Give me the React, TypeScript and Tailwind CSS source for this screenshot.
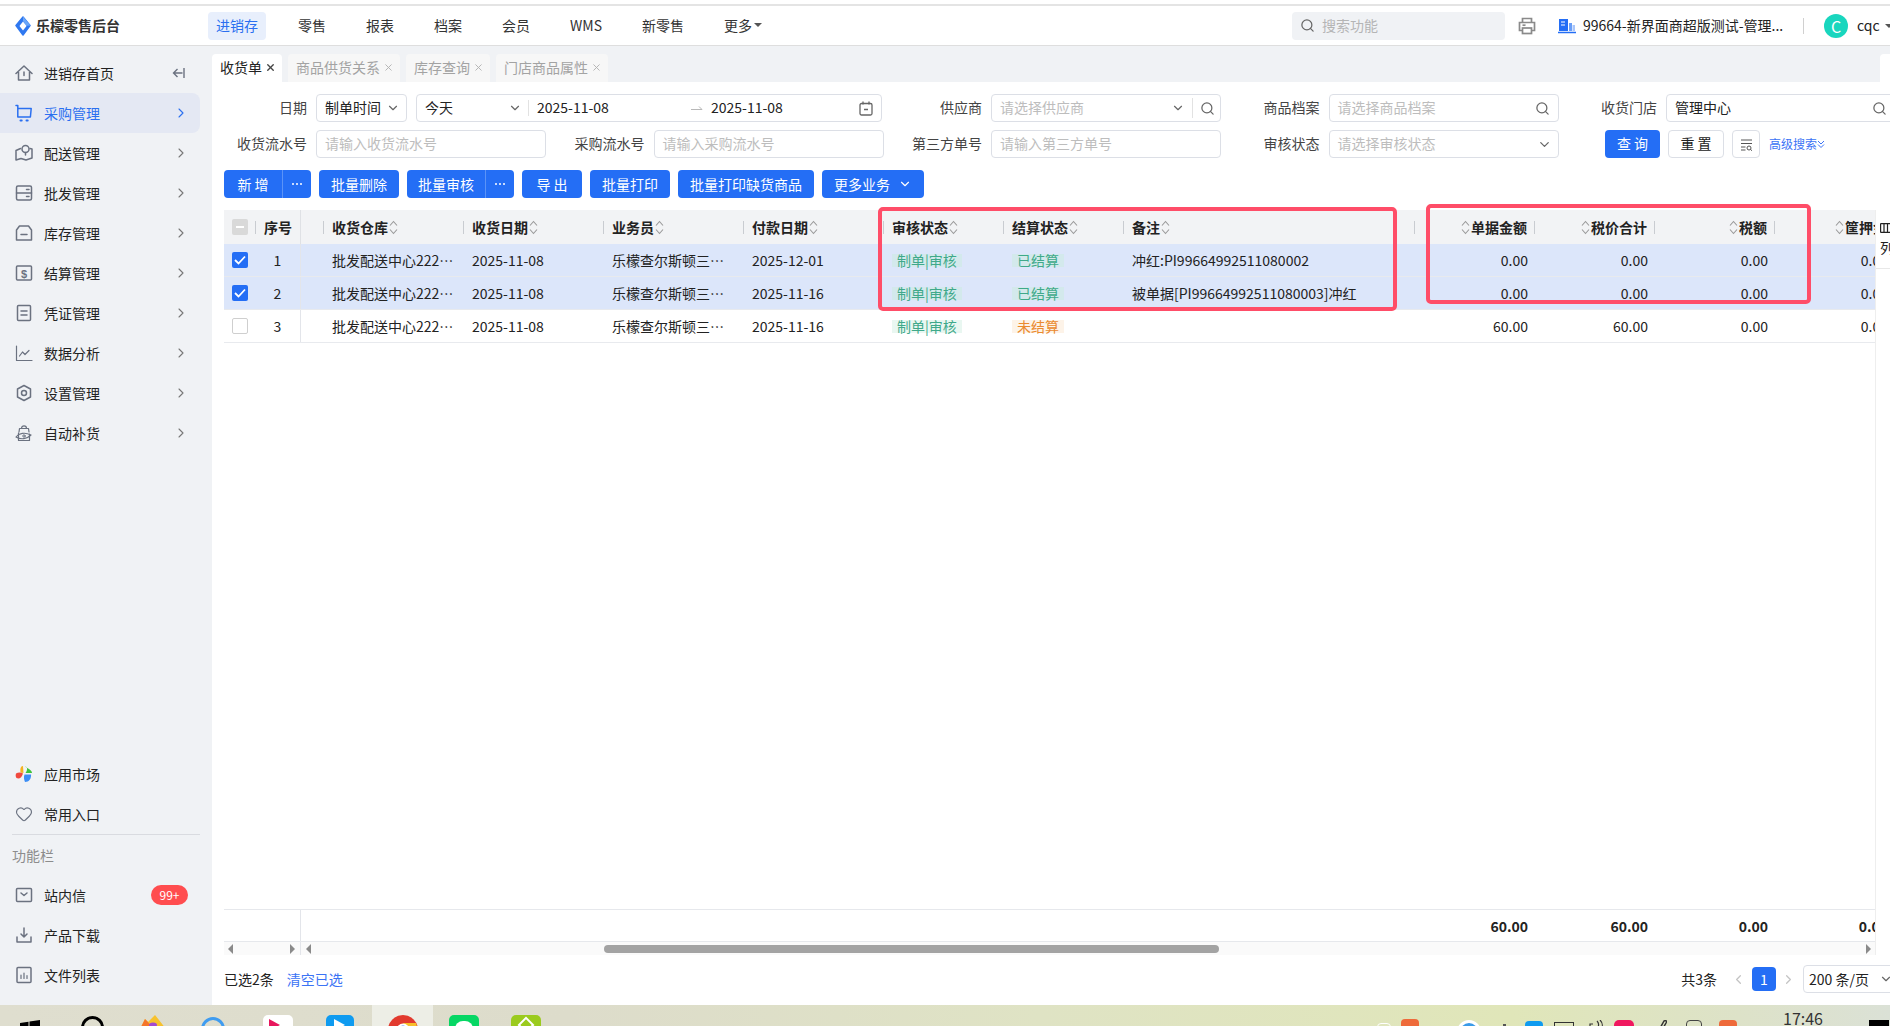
import { Search, ChevronRight, ChevronDown, ChevronLeft, Heart, X } from 'lucide-react';
import type { ReactNode } from 'react';

const Ico = ({ children, className = 'text-[#6b7280]' }: { children: ReactNode; className?: string }) => (
  <svg width="18" height="18" viewBox="0 0 18 18" fill="none" stroke="currentColor" strokeWidth="1.5" strokeLinejoin="round" strokeLinecap="round" className={`shrink-0 ${className}`}>
    {children}
  </svg>
);

const menuItems: { label: string; icon: ReactNode }[] = [
  { label: '进销存首页', icon: <Ico><path d="M1 9.5 9 2l8 7.5M3.5 8v8h11V8M9 8v3.5" /></Ico> },
  { label: '采购管理', icon: <Ico className="text-[#2a6ff0]"><path d="M1 1.5h1.8V13h12.4M2.8 4.5h13.4L15.4 13" /><path d="M5.5 16.5h1.2M11.5 16.5h1.2" strokeWidth="2" /></Ico> },
  { label: '配送管理', icon: <Ico><path d="M5.5 4.5 1 6.5V16l5-1.5 5 1.5 6-2V5l-2-.5" /><circle cx="10.5" cy="5" r="3.5" /><path d="M10.5 8.5v2.5" /></Ico> },
  { label: '批发管理', icon: <Ico><rect x="1.5" y="2" width="15" height="14" rx="1.5" /><path d="M1.5 9h15M11.5 5.5h2.5M11.5 12.5h2.5" /></Ico> },
  { label: '库存管理', icon: <Ico><path d="M4.5 2h9l3 4v10H1.5V6z" /><path d="M6 10.5h6" /></Ico> },
  {
    label: '结算管理',
    icon: (
      <Ico>
        <rect x="1.5" y="2" width="15" height="14" rx="1" />
        <text x="9" y="13.5" textAnchor="middle" fontSize="11" fontWeight="700" fill="currentColor" stroke="none" fontFamily="Liberation Sans">$</text>
      </Ico>
    ),
  },
  { label: '凭证管理', icon: <Ico><rect x="2.5" y="1.5" width="13" height="15" rx="1" /><path d="M6 7h6M6 11h6" /></Ico> },
  { label: '数据分析', icon: <Ico><path d="M1.5 2v14.5H17M4.5 12l3-4 2.5 2.5 4-4" strokeWidth="1.2" /></Ico> },
  { label: '设置管理', icon: <Ico><path d="M9 1.5 15.5 5v8L9 16.5 2.5 13V5z" /><circle cx="9" cy="9" r="2.5" /></Ico> },
  { label: '自动补货', icon: <Ico><path d="M4 8 4.5 4.5h9L14 8M6.5 4.5C6.5 1 11.5 1 11.5 4.5M3.5 9v7.5h11V10" strokeWidth="1.2" /><path d="M1 13c3-4 9-5 15-2-4 4-10 5-15 2z" strokeWidth="1.2" /><circle cx="9" cy="12" r="1.2" strokeWidth="1" /></Ico> },
];

const columns = [140, 140, 140, 140, 120, 120, 292, 120, 120, 120, 120];
const headers = ['收货仓库', '收货日期', '业务员', '付款日期', '审核状态', '结算状态', '备注', '单据金额', '税价合计', '税额', '筐押金'];

const rows = [
  { no: 1, date: '2025-11-08', pay: '2025-12-01', settle: '已结算', note: '冲红:PI99664992511080002', nums: ['0.00', '0.00', '0.00', '0.00'], checked: true },
  { no: 2, date: '2025-11-08', pay: '2025-11-16', settle: '已结算', note: '被单据[PI99664992511080003]冲红', nums: ['0.00', '0.00', '0.00', '0.00'], checked: true },
  { no: 3, date: '2025-11-08', pay: '2025-11-16', settle: '未结算', note: '', nums: ['60.00', '60.00', '0.00', '0.00'], checked: false },
];

const Sort = () => (
  <svg width="9" height="15" viewBox="0 0 9 15" fill="none" stroke="#9a9a9a" strokeWidth="1.1" className="shrink-0">
    <path d="M1 5.5l3.5-4L8 5.5M1 9.5l3.5 4 3.5-4" />
  </svg>
);

const Sep = () => <span className="block h-[13px] w-px shrink-0 bg-[#c9ccd1]" />;

function MenuRow({ label, icon, active }: { label: string; icon: ReactNode; active?: boolean }) {
  return (
    <div className={`flex h-10 w-[200px] items-center gap-[11px] rounded-r-lg pl-[15px] pr-4 text-sm ${active ? 'bg-[#e4e8f3] text-[#2a6ff0]' : 'text-[#222]'}`}>
      {icon}
      <span>{label}</span>
      {label === '进销存首页' ? (
        <svg width="13" height="12" viewBox="0 0 13 12" fill="none" stroke="#6b7280" strokeWidth="1.4" className="ml-auto mr-[-1px]">
          <path d="M5.5 2 1.5 6l4 4M1.5 6h9M12 1v10" />
        </svg>
      ) : (
        <ChevronRight size={16} strokeWidth={1.6} className={`ml-auto mr-[-5px] ${active ? 'text-[#2a6ff0]' : 'text-[#777]'}`} />
      )}
    </div>
  );
}

function Field({ label, width = 'w-[337.5px]', children }: { label: string; width?: string; children: ReactNode }) {
  return (
    <div className={`flex shrink-0 items-center ${width}`}>
      <span className="mr-[9px] w-[83px] pb-[2px] text-right text-sm text-[#444]">{label}</span>
      {children}
    </div>
  );
}

function Input({ text, value, icon }: { text: string; value?: boolean; icon?: ReactNode }) {
  return (
    <div className="flex h-7 w-[230px] shrink-0 items-center justify-between rounded border border-[#dcdfe6] bg-white pl-[8px] pr-[6px] text-sm">
      <span className={`pb-[2px] ${value ? 'text-[#222]' : 'text-[#bdbdbd]'}`}>{text}</span>
      {icon}
    </div>
  );
}

const Btn = ({ children, className = '' }: { children: ReactNode; className?: string }) => (
  <button className={`flex h-7 items-center justify-center whitespace-nowrap rounded bg-[#246ef5] px-3 text-sm text-white ${className}`}>{children}</button>
);

const SplitBtn = ({ label, w }: { label: string; w: string }) => (
  <div className="flex h-7 overflow-hidden rounded bg-[#246ef5] text-sm text-white">
    <span className={`flex items-center justify-center border-r border-[#5b93f7] ${w}`}>{label}</span>
    <span className="flex w-7 items-center justify-center gap-[2px]">
      <i className="h-[2px] w-[2px] rounded-full bg-white" />
      <i className="h-[2px] w-[2px] rounded-full bg-white" />
      <i className="h-[2px] w-[2px] rounded-full bg-white" />
    </span>
  </div>
);

const Tag = ({ text, tone }: { text: string; tone: string }) => (
  <span className={`inline-block h-[13px] px-[5px] leading-[13px] ${tone}`}>{text}</span>
);

function Check({ state }: { state: 'on' | 'off' | 'some' }) {
  if (state === 'on') {
    return (
      <span className="flex h-4 w-4 items-center justify-center rounded-[2px] bg-[#246ef5]">
        <svg width="12" height="10" viewBox="0 0 12 10" fill="none" stroke="#fff" strokeWidth="1.8"><path d="M1 5l3.5 3.5L11 1.5" /></svg>
      </span>
    );
  }
  if (state === 'some') {
    return (
      <span className="flex h-4 w-4 items-center justify-center rounded-[2px] bg-[#d9d9d9]">
        <span className="h-[2px] w-2 bg-white" />
      </span>
    );
  }
  return <span className="h-4 w-4 rounded-[2px] border border-[#cfcfcf] bg-white" />;
}

const Tile = ({ w, top, ml, className, children }: { w: string; top: string; ml: string; className: string; children?: ReactNode }) => (
  <div className={`h-[30px] shrink-0 overflow-hidden ${w} ${top} ${ml} ${className}`}>{children}</div>
);

export default function App() {
  return (
    <div className="relative flex h-screen w-screen flex-col overflow-hidden bg-white font-['Noto_Sans_CJK_SC','Noto_Sans',sans-serif] text-[#222]">
      <div className="h-[6px] shrink-0 border-b-2 border-[#e4e4e4]" />

      {/* Top bar */}
      <header className="flex h-10 shrink-0 items-center border-b border-[#dedede] bg-white text-sm">
        <div className="flex w-[208px] shrink-0 items-center pl-[15px]">
          <svg width="16" height="20" viewBox="0 0 16 20" className="shrink-0">
            <path d="M8 1 15 9.5 8 19 1 9.5z" fill="#2f78f0" stroke="#2f78f0" strokeWidth="1.5" strokeLinejoin="round" />
            <path d="M8 .5 15.5 9.5l-4 .3L8 5z" fill="#6aa6f8" />
            <path d="M8 5.5 11.5 10 8 14.5 4.5 10z" fill="#fff" />
          </svg>
          <span className="ml-[5px] pb-[2px] font-semibold text-[#333]">乐檬零售后台</span>
        </div>
        <nav className="flex items-center gap-6">
          <span className="flex h-7 items-center rounded bg-[#e8effc] px-2 pb-[2px] text-[#2a6ff0]">进销存</span>
          {['零售', '报表', '档案', '会员', 'WMS', '新零售'].map((n) => (
            <span key={n} className="px-2 pb-[2px] text-[#333]">{n}</span>
          ))}
          <span className="flex items-center gap-[2px] px-2 pb-[2px] text-[#333]">
            更多
            <span className="mt-[1px] border-x-[4px] border-t-[4px] border-x-transparent border-t-[#555]" />
          </span>
        </nav>
        <div className="ml-auto mr-[-2px] flex items-center">
          <div className="flex h-7 w-[213px] items-center gap-[7px] rounded bg-[#f0f2f5] pl-2 text-[#b5b5b5]">
            <Search size={15} className="text-[#666]" />
            <span className="pb-[2px]">搜索功能</span>
          </div>
          <svg width="18" height="18" viewBox="0 0 18 18" fill="none" stroke="#8a8a8a" strokeWidth="1.7" className="ml-[13px]">
            <path d="M4.5 5V1.5h9V5M4.5 13.5H1.5V5.5h15v8h-3" />
            <rect x="4.5" y="11" width="9" height="5.5" />
            <path d="M4.5 8.2h3" />
          </svg>
          <svg width="18" height="16" viewBox="0 0 18 16" className="ml-[22px]">
            <path d="M1 1h9v12H1z" fill="#246ef5" />
            <path d="M3 4h4M3 7h4" stroke="#fff" strokeWidth="1.2" />
            <path d="M11 5h3v8h-3z" fill="#6b9ff7" />
            <path d="M14.5 7h2.5v6h-2.5z" fill="#a8c5fa" />
            <path d="M0 14.5h18" stroke="#246ef5" strokeWidth="1.5" />
          </svg>
          <span className="ml-[7px] w-[201px] whitespace-nowrap pb-[2px] text-[#222]">99664-新界面商超版测试-管理...</span>
          <span className="ml-[19px] h-[16px] w-px bg-[#d0d0d0]" />
          <span className="ml-5 flex h-6 w-6 items-center justify-center rounded-full bg-[#19d6be] text-base text-white">C</span>
          <span className="ml-[9px] w-[21px] pb-[2px] text-[#222]">cqc</span>
          <span className="ml-[7px] mr-[-1px] border-x-[4px] border-t-[4px] border-x-transparent border-t-[#555]" />
        </div>
      </header>

      <div className="flex min-h-0 flex-1">
        {/* Sidebar */}
        <aside className="flex w-[212px] shrink-0 flex-col bg-[#f0f2f5] pb-[10px] pt-[7px]">
          {menuItems.map((m) => (
            <MenuRow key={m.label} label={m.label} icon={m.icon} active={m.label === '采购管理'} />
          ))}
          <div className="mt-auto">
            <div className="flex h-10 items-center gap-[11px] pl-[15px] text-sm">
              <svg width="18" height="18" viewBox="0 0 18 18" className="shrink-0">
                <path d="M8 1C5.5 1 5 4 5.5 7.5L8.5 8z" fill="#f5b31f" />
                <path d="M10 1.5c3 0 2.5 4 .5 6.5H17c0-2.5-3-4-7-6.5z" fill="#3ec43b" />
                <path d="M1 8.5c2-1.5 5-1.5 7 0-1 4-4 6-6.5 4.5C.5 12 .5 10 1 8.5z" fill="#f0493e" />
                <path d="M9.5 9.5H16c.5 4-2 7.5-6 7.5-1-2-1.5-5-.5-7.5z" fill="#3c8ef5" />
              </svg>
              应用市场
            </div>
            <div className="flex h-10 items-center gap-[11px] pl-[15px] text-sm">
              <Heart size={18} strokeWidth={1.5} className="shrink-0 text-[#6b7280]" />
              常用入口
            </div>
            <div className="mx-3 h-px w-[188px] bg-[#d9dbe0]" />
            <div className="flex h-10 items-center pl-3 text-sm text-[#8c8c8c]">功能栏</div>
            <div className="flex h-10 w-[188px] items-center gap-[11px] pl-[15px] text-sm">
              <Ico><rect x="1.5" y="2.5" width="15" height="13" rx="1" /><path d="M6 7l3 2.5L12 7" /></Ico>
              站内信
              <span className="ml-auto flex h-5 w-[37px] items-center justify-center rounded-full bg-[#ff4d4f] text-xs text-white">99+</span>
            </div>
            <div className="flex h-10 items-center gap-[11px] pl-[15px] text-sm">
              <Ico><path d="M9 2v9M6 8l3 3 3-3M2 11v5h14v-5" /></Ico>
              产品下载
            </div>
            <div className="flex h-10 items-center gap-[11px] pl-[15px] text-sm">
              <Ico><rect x="2" y="1.5" width="14" height="15" rx="1" /><path d="M6 9v3.5M9 7v5.5M12 9.5v3" strokeWidth="1.2" /></Ico>
              文件列表
            </div>
          </div>
        </aside>

        {/* Main */}
        <main className="flex min-w-0 flex-1 flex-col overflow-hidden">
          <div className="flex h-9 shrink-0 items-end gap-[6px] bg-[#f0f2f5] text-sm">
            <div className="flex h-7 w-[70px] items-center gap-[3px] rounded-t bg-white pb-[2px] pl-2">
              收货单 <X size={11} strokeWidth={3} className="text-[#444]" />
            </div>
            {[
              ['商品供货关系', 'w-[112px]'],
              ['库存查询', 'w-[84px]'],
              ['门店商品属性', 'w-[112px]'],
            ].map(([t, w]) => (
              <div key={t} className={`flex h-7 items-center gap-[3px] rounded-t bg-[#f7f7f7] pb-[2px] pl-2 text-[#a3a3a3] ${w}`}>
                {t} <X size={11} strokeWidth={2} className="text-[#b0b0b0]" />
              </div>
            ))}
            <div className="ml-auto h-7 w-[10px] rounded-tl bg-white" />
          </div>

          <div className="shrink-0 pl-3 pt-3">
            {/* Filters row 1 */}
            <div className="flex w-[1700px]">
              <Field label="日期" width="w-[675px]">
                <div className="flex h-7 w-[91px] shrink-0 items-center justify-between rounded border border-[#dcdfe6] pl-2 pr-[6px] text-sm">
                  <span className="pb-[2px]">制单时间</span> <ChevronDown size={14} className="text-[#666]" />
                </div>
                <div className="ml-[9px] flex h-7 w-[466px] shrink-0 items-center rounded border border-[#dcdfe6] text-sm">
                  <span className="ml-2 w-[83px] pb-[2px]">今天</span>
                  <ChevronDown size={14} className="text-[#666]" />
                  <span className="ml-[6px] h-4 w-px bg-[#e2e2e2]" />
                  <span className="ml-[8px] w-[154px] pb-[2px]">2025-11-08</span>
                  <svg width="12" height="6" viewBox="0 0 12 6" fill="none" stroke="#b8b8b8" className="mr-[8px]"><path d="M0 4.5h11L8 1.5" /></svg>
                  <span className="w-[148px] pb-[2px]">2025-11-08</span>
                  <svg width="14" height="15" viewBox="0 0 14 15" fill="none" stroke="#666" strokeWidth="1.3">
                    <rect x="1" y="2.5" width="12" height="11.5" rx="1.5" />
                    <path d="M4 .5v3M10 .5v3M5 8.5h4" />
                  </svg>
                </div>
              </Field>
              <Field label="供应商">
                <div className="flex h-7 w-[230px] shrink-0 items-center rounded border border-[#dcdfe6] pl-2 pr-[5px] text-sm text-[#bdbdbd]">
                  <span className="pb-[2px]">请选择供应商</span>
                  <ChevronDown size={14} className="ml-auto text-[#666]" />
                  <span className="mx-[7px] h-5 w-px bg-[#e2e2e2]" />
                  <Search size={15} className="text-[#666]" />
                </div>
              </Field>
              <Field label="商品档案">
                <Input text="请选择商品档案" icon={<Search size={15} className="mr-[2px] text-[#666]" />} />
              </Field>
              <Field label="收货门店">
                <Input text="管理中心" value icon={<Search size={15} className="mr-[2px] text-[#666]" />} />
              </Field>
            </div>

            {/* Filters row 2 */}
            <div className="mt-2 flex w-[1700px] items-center">
              <Field label="收货流水号"><Input text="请输入收货流水号" /></Field>
              <Field label="采购流水号"><Input text="请输入采购流水号" /></Field>
              <Field label="第三方单号"><Input text="请输入第三方单号" /></Field>
              <Field label="审核状态">
                <Input text="请选择审核状态" icon={<ChevronDown size={15} className="text-[#666]" />} />
              </Field>
              <div className="ml-[31px] flex items-center">
                <button className="h-7 w-[55px] rounded bg-[#246ef5] pb-[2px] text-sm text-white">查 询</button>
                <button className="ml-2 h-7 w-[56px] rounded border border-[#dcdfe6] pb-[2px] text-sm">重 置</button>
                <span className="ml-2 flex h-7 w-7 items-center justify-center rounded border border-[#dcdfe6]">
                  <svg width="13" height="13" viewBox="0 0 13 13" fill="none" stroke="#555" strokeWidth="1"><path d="M1 2h11M1 5.5h11M1 9h4.5M1 12h4.5" /><circle cx="9" cy="10" r="2" /><path d="M10.5 11.5l1.5 1.2" /></svg>
                </span>
                <span className="ml-[9px] flex items-center text-xs text-[#3b73f5]">
                  高级搜索
                  <svg width="8" height="9" viewBox="0 0 8 9" fill="none" stroke="#3b73f5" strokeWidth="1"><path d="M1 1l3 3 3-3M1 4.5l3 3 3-3" /></svg>
                </span>
              </div>
            </div>

            {/* Toolbar */}
            <div className="mt-3 flex gap-2">
              <SplitBtn label="新 增" w="w-[59px]" />
              <Btn>批量删除</Btn>
              <SplitBtn label="批量审核" w="w-[79px]" />
              <Btn className="w-[60px]">导 出</Btn>
              <Btn>批量打印</Btn>
              <Btn>批量打印缺货商品</Btn>
              <Btn className="w-[102px] gap-2 !px-0">更多业务 <ChevronDown size={14} /></Btn>
            </div>
          </div>

          {/* Table */}
          <div className="ml-3 mt-3 flex min-h-0 flex-1">
            <div className="flex min-w-0 flex-1 flex-col overflow-hidden text-sm">
              <div className="flex h-[34px] shrink-0 bg-[#f2f3f5] font-semibold">
                <div className="flex w-[77px] shrink-0 items-center border-r border-[#dfe1e5] pl-2">
                  <Check state="some" />
                  <span className="ml-[7px]"><Sep /></span>
                  <span className="ml-2">序号</span>
                </div>
                <div className="w-[22px] shrink-0" />
                {headers.map((h, i) => (
                  <div key={h} className="flex shrink-0 items-center" style={{ width: columns[i] }}>
                    {i < 7 ? (
                      <>
                        <Sep />
                        <span className="ml-2">{h}</span>
                        <span className="ml-[1px]"><Sort /></span>
                        {i === 6 && <span className="ml-auto"><Sep /></span>}
                      </>
                    ) : (
                      <>
                        <span className="ml-auto mr-[1px]"><Sort /></span>
                        <span>{h}</span>
                        <span className="ml-[7px]"><Sep /></span>
                      </>
                    )}
                  </div>
                ))}
              </div>

              {rows.map((r) => (
                <div key={r.no} className={`flex h-[33px] shrink-0 items-center border-b border-[#e8eaee] ${r.checked ? 'bg-[#dce6fa]' : 'bg-white'}`}>
                  <div className="flex h-full w-[77px] shrink-0 items-center border-r border-[#e3e5ea] pl-2">
                    <Check state={r.checked ? 'on' : 'off'} />
                    <span className="ml-[7px] w-[45px] text-center">{r.no}</span>
                  </div>
                  <div className="w-[22px] shrink-0" />
                  <div className="w-[140px] shrink-0 pl-[9px]">批发配送中心222…</div>
                  <div className="w-[140px] shrink-0 pl-[9px]">{r.date}</div>
                  <div className="w-[140px] shrink-0 pl-[9px]">乐檬查尔斯顿三…</div>
                  <div className="w-[140px] shrink-0 pl-[9px]">{r.pay}</div>
                  <div className="w-[120px] shrink-0 pl-[9px]">
                    <Tag text="制单|审核" tone={r.checked ? 'bg-[#d3e9ec] text-[#3fa98a]' : 'bg-[#e9f7f1] text-[#3fa98a]'} />
                  </div>
                  <div className="w-[120px] shrink-0 pl-[9px]">
                    <Tag text={r.settle} tone={r.checked ? 'bg-[#d3e9ec] text-[#3fa98a]' : 'bg-[#fdf3e8] text-[#ea8a2f]'} />
                  </div>
                  <div className="w-[292px] shrink-0 pl-[9px]">{r.note}</div>
                  {r.nums.map((n, i) => (
                    <div key={i} className="w-[120px] shrink-0 pr-[7px] text-right">{n}</div>
                  ))}
                </div>
              ))}

              <div className="flex-1" />

              <div className="flex h-[33px] shrink-0 items-center border-y border-[#e6e8ec] font-semibold">
                <div className="h-full w-[77px] shrink-0 border-r border-[#e3e5ea]" />
                <div className="w-[1114px] shrink-0" />
                {['60.00', '60.00', '0.00', '0.00'].map((n, i) => (
                  <div key={i} className="w-[120px] shrink-0 pr-[7px] text-right">{n}</div>
                ))}
              </div>

              <div className="flex h-[13px] shrink-0 items-center bg-[#fafafa]">
                <div className="flex h-full w-[77px] shrink-0 items-center justify-between border-r border-[#e3e5ea] pl-1 pr-[5px]">
                  <span className="border-y-[5px] border-r-[5px] border-y-transparent border-r-[#8a8a8a]" />
                  <span className="border-y-[5px] border-l-[5px] border-y-transparent border-l-[#8a8a8a]" />
                </div>
                <span className="ml-[5px] border-y-[5px] border-r-[5px] border-y-transparent border-r-[#8a8a8a]" />
                <span className="ml-[293px] h-2 w-[615px] rounded bg-[#a3a3a3]" />
                <span className="ml-auto mr-[4px] border-y-[5px] border-l-[5px] border-y-transparent border-l-[#8a8a8a]" />
              </div>
            </div>

            {/* Column settings strip */}
            <div className="w-[15px] shrink-0 overflow-hidden border-l border-[#eeeeee] text-sm">
              <div className="h-[59px] border-b border-[#e8e8e8] pl-[4px] pt-[13px]">
                <svg width="12" height="10" viewBox="0 0 12 10" fill="none" stroke="#222" strokeWidth="1.2" className="block"><path d="M.6.6h10.8M.6 9.4h10.8M.6.6v8.8M4 .6v8.8M7.5.6v8.8M11.4.6v8.8" /></svg>
                <span className="mt-[4px] block">列</span>
              </div>
            </div>
          </div>

          {/* Footer */}
          <div className="flex h-[50px] shrink-0 items-center pb-[2px] pl-3 text-sm">
            <span>已选2条</span>
            <span className="ml-[13px] text-[#3b73f5]">清空已选</span>
            <span className="ml-auto">共3条</span>
            <ChevronLeft size={15} className="ml-[14px] text-[#c4c4c4]" />
            <span className="ml-[6px] flex h-6 w-6 items-center justify-center rounded bg-[#246ef5] text-white">1</span>
            <ChevronRight size={15} className="ml-[5px] text-[#c4c4c4]" />
            <div className="ml-[7px] mr-[-6px] flex h-7 w-[93px] items-center justify-between rounded border border-[#dcdfe6] pl-[5px] pr-[2px]">
              200 条/页 <ChevronDown size={14} className="text-[#666]" />
            </div>
          </div>
        </main>
      </div>

      {/* Windows taskbar, cut off by the screen edge */}
      <div className="flex h-[21px] shrink-0 justify-between overflow-hidden bg-[linear-gradient(90deg,#dfdecf_0%,#dddccb_30%,#dfe3c4_55%,#e0e6b9_80%,#dde2c8_92%,#dbe1d6_100%)]">
        <div className="flex items-start">
          <svg width="20" height="20" viewBox="0 0 20 20" className="ml-[20px] mt-[15px] shrink-0">
            <path d="M0 3l8.5-1.2V9.5H0zM9.5 1.6 20 0v9.5H9.5z" fill="#000" />
          </svg>
          <Tile w="w-[23px]" top="mt-[11px]" ml="ml-[41px]" className="rounded-full border-[3px] border-black" />
          <svg width="26" height="30" viewBox="0 0 26 30" className="ml-[36px] mt-[10px] shrink-0">
            <path d="M0 14 5 4l3 3 7-7 4 5 7 9v16H0z" fill="#f7c22d" />
            <path d="M0 14 5 4l3 3 2 3-1 20H0z" fill="#f5752a" />
            <ellipse cx="13" cy="10" rx="4" ry="2.5" fill="#a34bd0" />
          </svg>
          <Tile w="w-[24px]" top="mt-[12px]" ml="ml-[35px]" className="rounded-full border-[3px] border-[#3f9cf0]" />
          <Tile w="w-[30px]" top="mt-[10px]" ml="ml-[38px]" className="rounded-[5px] bg-white">
            <div className="ml-[6px] mt-[4px] h-0 w-0 border-y-[6px] border-l-[11px] border-y-transparent border-l-[#e8175d]" />
          </Tile>
          <Tile w="w-[28px]" top="mt-[10px]" ml="ml-[33px]" className="rounded-[5px] bg-[#0f9bf0]">
            <div className="ml-[8px] mt-[4px] h-0 w-0 border-y-[6px] border-l-[11px] border-y-transparent border-l-white" />
          </Tile>
          <div className="ml-[18px] flex h-full w-[61px] justify-center bg-[#edeee6] pt-[10px]">
            <svg width="30" height="30" viewBox="0 0 30 30" className="shrink-0">
              <circle cx="15" cy="15" r="15" fill="#e23a2e" />
              <path d="M15 8h13l2 7-10 1z" fill="#f7bf2b" />
              <circle cx="15" cy="15" r="6.5" fill="#fff" />
              <circle cx="15" cy="15" r="4.5" fill="#3d7ef0" />
            </svg>
          </div>
          <Tile w="w-[30px]" top="mt-[10px]" ml="ml-[16px]" className="rounded-[5px] bg-[#06d764]">
            <div className="ml-[6px] mt-[6px] h-4 w-[18px] rounded-full bg-white" />
          </Tile>
          <Tile w="w-[30px]" top="mt-[10px]" ml="ml-[32px]" className="rounded-[5px] bg-[#9bcb1e]">
            <div className="ml-[9px] mt-[4px] h-3 w-3 rotate-45 border-2 border-white" />
          </Tile>
        </div>
        <div className="flex items-start">
          <Tile w="w-[14px]" top="mt-[18px]" ml="ml-0" className="rounded-t-sm border border-white" />
          <Tile w="w-[18px]" top="mt-[14px]" ml="ml-[10px]" className="rounded-t bg-[#ee6a3a]" />
          <Tile w="w-[24px]" top="mt-[15px]" ml="ml-[38px]" className="rounded-full border-[3px] border-white bg-[#3a9be8]" />
          <Tile w="w-[3px]" top="mt-[19px]" ml="ml-[22px]" className="bg-[#555]" />
          <Tile w="w-[18px]" top="mt-[16px]" ml="ml-[19px]" className="rounded-[4px] bg-[#0f9bf0]" />
          <Tile w="w-[20px]" top="mt-[17px]" ml="ml-[11px]" className="border border-[#333]" />
          <svg width="14" height="10" viewBox="0 0 14 10" fill="none" stroke="#333" strokeWidth="1.2" className="ml-[15px] mt-[15px] shrink-0">
            <path d="M1 9V4h3M8 1c2 2 2 5 0 8M11 0c3 3 3 7 0 10" />
          </svg>
          <Tile w="w-[20px]" top="mt-[15px]" ml="ml-[11px]" className="rounded-[5px] bg-[#f0185f]" />
          <svg width="9" height="10" viewBox="0 0 9 10" fill="none" stroke="#333" strokeWidth="1.5" className="ml-[24px] mt-[15px] shrink-0">
            <path d="M1 10 6 1c2-1 3 0 2 2L4 10" />
          </svg>
          <Tile w="w-[16px]" top="mt-[15px]" ml="ml-[19px]" className="rounded-t-sm border border-[#444]" />
          <Tile w="w-[18px]" top="mt-[15px]" ml="ml-[17px]" className="rounded-t bg-[#ee6a3a]" />
          <span className="ml-[46px] mt-[3px] w-[40px] text-base leading-[20px] text-[#333]">17:46</span>
          <Tile w="w-[20px]" top="mt-[15px]" ml="ml-[46px]" className="bg-black" />
          <span className="w-px" />
        </div>
      </div>

      {/* Hand-drawn annotation boxes on the screenshot */}
      <div className="pointer-events-none absolute left-[878px] top-[207px] h-[104px] w-[519px] rounded-[5px] border-4 border-[#ff4d68]" />
      <div className="pointer-events-none absolute left-[1426px] top-[204px] h-[100px] w-[385px] rounded-[5px] border-4 border-[#ff4d68]" />
    </div>
  );
}
